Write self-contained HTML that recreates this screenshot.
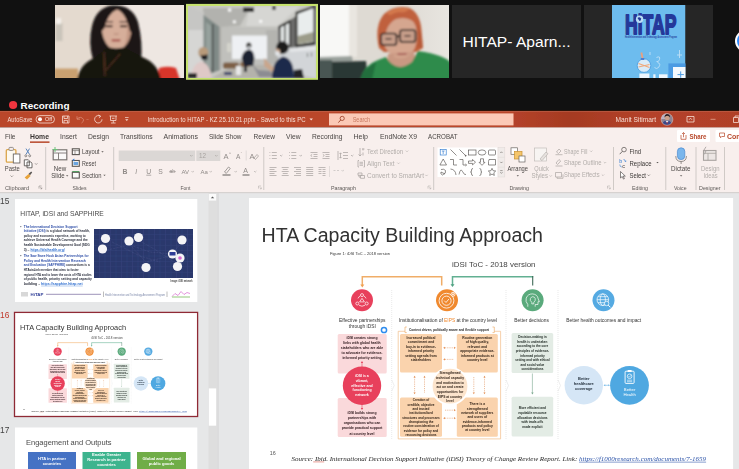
<!DOCTYPE html>
<html lang="en">
<head>
<meta charset="utf-8">
<title>Zoom Meeting - PowerPoint share</title>
<style>
html,body{margin:0;padding:0;background:#111;width:739px;height:469px;overflow:hidden}
svg{display:block;position:absolute;left:0;top:0}
text{font-family:"Liberation Sans",sans-serif}
.ser{font-family:"Liberation Serif",serif}
</style>
</head>
<body>
<svg width="739" height="469" viewBox="0 0 739 469">
<defs>
<filter id="b1" x="-10%" y="-10%" width="120%" height="120%"><feGaussianBlur stdDeviation="0.8"/></filter>
<filter id="b2" x="-10%" y="-10%" width="120%" height="120%"><feGaussianBlur stdDeviation="1.6"/></filter>
<filter id="b05" x="-5%" y="-5%" width="110%" height="110%"><feGaussianBlur stdDeviation="0.35"/></filter>
<clipPath id="c1"><rect x="55" y="5" width="129" height="73"/></clipPath>
<clipPath id="c2"><rect x="188" y="6" width="128" height="72"/></clipPath>
<clipPath id="c3"><rect x="320" y="5" width="129" height="73"/></clipPath>
<clipPath id="c5"><rect x="612" y="5" width="73.500" height="73"/></clipPath>
<linearGradient id="g3" x1="0" x2="1" y1="0" y2="0"><stop offset="0" stop-color="#dedad3"/><stop offset="1" stop-color="#e8e5e0"/></linearGradient>
<filter id="soft" x="0" y="0" width="100%" height="100%" filterUnits="userSpaceOnUse"><feGaussianBlur stdDeviation="0.32"/></filter>
</defs>
<rect x="0" y="0" width="739" height="469" fill="#111111"/>

<!-- ============ ZOOM VIDEO STRIP ============ -->
<!-- tile 1 : woman, black hair -->
<g clip-path="url(#c1)">
  <rect x="55" y="5" width="129" height="73" fill="#e4dacf"/>
  <rect x="118" y="5" width="66" height="73" fill="#eee7e2"/>
  <g filter="url(#b1)">
    <rect x="55.500" y="23" width="7" height="18" fill="#c9c4ba"/>
    <rect x="56" y="18" width="5" height="6" fill="#f4f1ec"/>
    <rect x="54" y="68.500" width="24" height="12" fill="#c9a070"/>
    <path d="M157 80 L159 68 Q168 65.500 176 68 L180 80 Z" fill="#d8352a"/>
    <!-- hair -->
    <path d="M93 60 Q88 42 92 26 Q96 8 112 5.500 Q132 4 138 22 Q143 42 141 62 L128 62 L102 62 Z" fill="#1d1614"/>
    <!-- face -->
    <path d="M101.500 26 Q102 10 116 9 Q131 10 131.500 27 Q131 40 124 47 Q116.500 52 109 47 Q102 40 101.500 26Z" fill="#d6ae9a"/>
    <path d="M124 12 Q132 16 131.500 30 Q130 42 124 47 Q128 36 127 24Z" fill="#c49884"/>
    <path d="M101 32 Q99 14 110 8.500 Q116 6.500 117 9.500 Q108 13 104.500 28Z" fill="#1d1614"/>
    <path d="M133 36 Q135 14 122 8.500 Q117 6.500 117 9.500 Q126 13 129.500 30Z" fill="#1d1614"/>
    <!-- brows/eyes/nose/mouth -->
    <rect x="104.500" y="21.300" width="8.500" height="1.200" fill="#4a3a34"/>
    <rect x="119.500" y="21.300" width="8.500" height="1.200" fill="#4a3a34"/>
    <rect x="105.500" y="25.300" width="7" height="1.900" fill="#33231f"/>
    <rect x="120" y="25.300" width="7" height="1.900" fill="#33231f"/>
    <path d="M114 33.500 q2 1.500 4.500 0" stroke="#b88a78" stroke-width="1.200" fill="none"/>
    <rect x="111.500" y="39.300" width="9" height="2.200" rx="1" fill="#a8544e"/>
    <!-- sweater -->
    <path d="M77 80 Q80 64 94 58 L104 50 Q108 46.500 116 48.500 Q126 46.500 129 50 L142 57 Q158 63 161 80 Z" fill="#17130f"/>
    <path d="M104 52 L105 76 M120 54 L106 70" stroke="#8a4a30" stroke-width="0.700" fill="none"/>
  </g>
</g>

<!-- tile 2 : meeting room, active speaker border -->
<rect x="186" y="3.900" width="132" height="75.900" fill="#c6e26e"/>
<g clip-path="url(#c2)">
  <rect x="188" y="6" width="128" height="72" fill="#c6c6c2"/>
  <g filter="url(#b1)">
    <!-- ceiling -->
    <path d="M188 6 L316 6 L316 8 L278 27 L221 27 L203 14 L188 8Z" fill="#cacac6"/>
    <path d="M203 8 L250 8 L240 26 L221 27 L203 18Z" fill="#b2b2ae"/>
    <path d="M250 6 L300 6 L278 26 L246 26Z" fill="#d6d6d3"/>
    <!-- back wall -->
    <rect x="220" y="27" width="60" height="40" fill="#c0c0bc"/>
    <rect x="266" y="30" width="14" height="34" fill="#b4b4b0"/>
    <!-- left wall -->
    <path d="M188 6 L203.500 12 L203.500 78 L188 78Z" fill="#d6d6d4"/>
    <path d="M188 6 L203.500 12 L203.500 30 L188 30Z" fill="#c6c6c4"/>
    <path d="M203.500 15 L220 27 L220 70 L203.500 76Z" fill="#808a87"/>
    <path d="M206 22 L211 26 L211 68 L206 70Z" fill="#96a19d"/>
    <rect x="212" y="24" width="1.500" height="48" fill="#4a4e4c"/>
    <rect x="219" y="27" width="2" height="42" fill="#a8a8a4"/>
    <!-- right wall with windows -->
    <path d="M278 27 L316 6 L316 78 L278 70Z" fill="#d2d5d8"/>
    <path d="M278 27 L316 6 L316 10 L278 30Z" fill="#8a8a86"/>
    <path d="M290 20 L296 16 L296 47 L290 48Z" fill="#6c6c6a"/>
    <path d="M295.500 12 L315.500 5 L315.500 45 L295.500 47.500Z" fill="#2a2a28"/>
    <path d="M297.500 14 L313.500 8 L313.500 42 L297.500 44.500Z" fill="#e9eded"/>
    <path d="M298 36 L313 32 L313 41.500 L298 44Z" fill="#9c9c8a"/>
    <path d="M278.500 26 L290.500 19.500 L290.500 47 L278.500 49Z" fill="#2a2a28"/>
    <path d="M280.500 27.500 L284 25.500 L284 46 L280.500 46.500Z" fill="#e4e8e8"/>
    <path d="M285.500 25 L289 23 L289 45 L285.500 45.500Z" fill="#e4e8e8"/>
    <path d="M290 49 L316 46 L316 50 L290 52Z" fill="#e4e6e8"/>
    <rect x="307" y="53" width="1" height="4" fill="#6a6a6a"/><rect x="311" y="52.500" width="1" height="4" fill="#6a6a6a"/>
    <!-- projector -->
    <rect x="243" y="7.500" width="11" height="4.500" fill="#262626"/>
    <rect x="272.500" y="6" width="3" height="4" fill="#262626"/>
    <circle cx="229.600" cy="10" r="1.700" fill="#ffffff"/><circle cx="234.400" cy="21.800" r="1.500" fill="#ffffff"/><circle cx="260.700" cy="21.300" r="1.500" fill="#ffffff"/>
    <!-- whiteboard -->
    <rect x="232" y="35.500" width="35" height="23.500" fill="#eef0f3"/>
    <rect x="227" y="43" width="4" height="9" fill="#d4d4cc"/>
    <!-- table -->
    <path d="M212 78 L234 65 L268 65 L280 78Z" fill="#b4b2ac"/>
    <rect x="223" y="62.500" width="16" height="6" rx="2" fill="#7d5e44"/>
    <rect x="240" y="62" width="10" height="5" rx="2" fill="#8a6a4c"/>
    <path d="M252 64 L259 77 L274 77 L270 71 L258 70Z" fill="#8c8c92"/>
    <rect x="236" y="66" width="5" height="9" fill="#e8e8e8"/>
    <rect x="224" y="72" width="8" height="3" fill="#34406a"/>
    <rect x="244" y="66" width="3" height="6" fill="#2a2a30"/>
    <!-- left person -->
    <ellipse cx="203.300" cy="52.500" rx="5" ry="5.500" fill="#b89a7a"/>
    <path d="M200.500 55.500 L207.500 54.500 L207.500 59.500 L202 60Z" fill="#1e1e20"/>
    <path d="M191 78 Q192 64 201 61.500 Q210 63.500 211.500 78Z" fill="#dfc9c7"/>
    <rect x="188" y="73" width="9" height="5" fill="#2a2a2c"/>
    <!-- standing person -->
    <ellipse cx="248.800" cy="45.400" rx="2.600" ry="3" fill="#2a2622"/>
    <rect x="247.600" y="46" width="2.600" height="2" fill="#c8ccd0"/>
    <path d="M241.500 58 Q243 50 249 49.500 Q254 50 254.500 58 L253 66 L244 66Z" fill="#1e2230"/>
    <!-- right person -->
    <ellipse cx="282.400" cy="47.600" rx="6.300" ry="6.300" fill="#1c1c1e"/>
    <path d="M276 48 L280 50 L280 55 L276.500 55Z" fill="#caa890"/>
    <path d="M275 51 L279.500 52 L279.500 56 L275.800 55.500Z" fill="#e4e8ec"/>
    <path d="M272 78 Q272 61 283 56.500 Q294 58 294 78Z" fill="#1d2a4c"/>
    <path d="M264 58 L268 62 L274 68 L272 72 L264 66Z" fill="#c9a68c"/>
    <path d="M294 70 L302 69 L304 78 L294 78Z" fill="#202228"/>
  </g>
</g>

<!-- tile 3 : woman, red hair, green shirt -->
<g clip-path="url(#c3)">
  <rect x="320" y="5" width="129" height="73" fill="#dedad3"/>
  <rect x="400" y="5" width="49" height="73" fill="url(#g3)"/>
  <g filter="url(#b1)">
    <rect x="318" y="3" width="31" height="57" fill="#f8f8f6"/>
    <rect x="349" y="5" width="8" height="52" fill="#e9e6e0"/>
    <path d="M318 57 L352 56 L353 63 L318 63Z" fill="#9aa19c"/>
    <path d="M318 62 L366 61 L368 80 L318 80Z" fill="#2c3836"/>
    <rect x="318" y="60" width="14" height="20" fill="#4a5652"/>
    <!-- hair -->
    <path d="M379 48 Q374 26 384 14 Q394 5 408 7.500 Q420 12 421.500 30 L423 48 L416 52 L384 52Z" fill="#c0603c"/>
    <path d="M386 13 Q398 5.500 410 9 Q404 13 392 16Z" fill="#d4794e"/>
    <!-- face -->
    <path d="M381.500 34 Q382 18 396 15.500 Q412 14 416.500 28 Q419 44 412 53 Q404 61 394 57 Q383 50 381.500 34Z" fill="#d5a68f"/>
    <path d="M381 34 Q381 16 398 12 Q414 12 418 26 Q410 16 398 18.500 Q388 21 385 36Z" fill="#c0603c"/>
    <path d="M415 22 Q423 32 422.500 48 L417 47 Q419 36 415 22Z" fill="#b85a38"/>
    <!-- glasses -->
    <rect x="381" y="33.500" width="15.500" height="11.500" rx="2.500" fill="#c79e8a" stroke="#2a2422" stroke-width="1.700"/>
    <rect x="400" y="30" width="15.500" height="12" rx="2.500" fill="#c79e8a" stroke="#2a2422" stroke-width="1.700"/>
    <path d="M396.500 37 L400 35.500" stroke="#2a2422" stroke-width="1.500"/>
    <rect x="385.500" y="38" width="6" height="1.600" fill="#4a3a34"/><rect x="404.500" y="35" width="6" height="1.600" fill="#4a3a34"/>
    <!-- neck + shirt -->
    <path d="M388 54 L414 52 L418 70 L386 72Z" fill="#c99882"/>
    <path d="M394 57 Q404 61 412 53 Q404 58 394 55Z" fill="#d5a68f"/>
    <rect x="397.500" y="53" width="9" height="1.800" fill="#a8605a"/>
    <path d="M360 80 Q364 65 378 60 L386 57 Q396 74 412 62 L418 51 Q446 55 452 64 L452 80Z" fill="#2d8b4b"/>
    <path d="M360 80 Q364 68 376 62 L372 80Z" fill="#216e3c"/>
  </g>
</g>

<!-- tile 4 : name only -->
<rect x="452" y="5" width="129" height="73" fill="#262626"/>
<text x="462.500" y="47" font-size="15.400" fill="#ffffff" textLength="108" lengthAdjust="spacingAndGlyphs">HITAP- Aparn...</text>

<!-- tile 5 : HITAP logo -->
<rect x="584" y="5" width="129" height="73" fill="#262626"/>
<g clip-path="url(#c5)">
  <rect x="612" y="5" width="73.500" height="73" fill="#6dbcee"/>
  <text x="625" y="34.400" font-size="27.800" font-weight="700" fill="#24389a" stroke="#24389a" stroke-width="1.800" stroke-linejoin="round" textLength="51.500" lengthAdjust="spacingAndGlyphs">HiTAP</text>
  <circle cx="639.600" cy="19.200" r="3.700" fill="#b9dcf4"/>
  <path d="M637.500 18 q2 -1.500 3.500 0.500 q0.500 2 -1.500 2.500z" fill="#24389a"/>
  <text x="625" y="38.200" font-size="2.900" fill="#24389a" font-weight="700" textLength="52" lengthAdjust="spacingAndGlyphs">Health Intervention and Technology Assessment Program</text>
  <g filter="url(#b05)">
    <circle cx="644" cy="65.600" r="6.800" fill="#d9ecf9" stroke="#4f9fe0" stroke-width="0.900"/>
    <path d="M638.500 63.500 L649.500 67.500 M638.500 67 L649.500 64.500" stroke="#f0a87a" stroke-width="1.200"/>
    <rect x="641.200" y="52.500" width="1.800" height="7" fill="#e8a080" transform="rotate(-12 642 56)"/>
    <rect x="640.800" y="58" width="3.500" height="2" fill="#4f7fd0"/>
    <rect x="639.400" y="73.500" width="10" height="4.500" fill="#eef6fd"/>
    <rect x="659" y="74.300" width="8.500" height="3.700" fill="#eef6fd"/>
    <rect x="653.300" y="74.300" width="2.200" height="3.700" fill="#eef6fd"/>
    <rect x="668.400" y="63.400" width="18" height="15" fill="#4b9be3"/>
    <rect x="673" y="67" width="13" height="11" fill="#f4f9fe"/>
    <path d="M677.500 74.600 L683.900 74.600 M680.700 71.400 L680.700 77.800" stroke="#4b9be3" stroke-width="1"/>
    <path d="M656.500 57.500 q4 -2 3 2 q-1 3 -3 2 m1 1 q4 1 1 5 q-2 2 -4 0" stroke="#bfe0f6" stroke-width="0.900" fill="none"/>
    <path d="M679.500 50 l0 8 m-2.500 -3 l5 0" stroke="#bfe0f6" stroke-width="0.900"/>
    <path d="M650 52 v3" stroke="#bfe0f6" stroke-width="0.900"/>
  </g>
</g>
<!-- tile 6 partial avatar -->
<circle cx="746" cy="41" r="11" fill="#ffffff"/>
<circle cx="746" cy="41" r="9" fill="#2d8cff"/>
<!-- ============ RECORDING ============ -->
<circle cx="13.100" cy="105" r="4.100" fill="#f0353f"/>
<text x="20.600" y="108.700" font-size="9.900" font-weight="700" fill="#ffffff">Recording</text>

<!-- ============ POWERPOINT ============ -->
<g filter="url(#soft)">
<!-- title bar -->
<rect x="0" y="111" width="739" height="16.500" fill="#ba472a"/>
<linearGradient id="tbg" x1="0" x2="1" y1="0" y2="0"><stop offset="0" stop-color="#b4422a"/><stop offset="0.25" stop-color="#a53a22"/><stop offset="0.6" stop-color="#b4422a"/><stop offset="1" stop-color="#b04028"/></linearGradient>
<rect x="513.500" y="111" width="226" height="16.500" fill="url(#tbg)"/>
<rect x="0" y="110.300" width="739" height="0.800" fill="#4a140a" opacity="0.7"/><rect x="0" y="111.100" width="739" height="0.700" fill="#d07a62" opacity="0.6"/>
<g fill="#f7ddd3" font-size="6.600">
  <text x="7.500" y="121.700" textLength="25" lengthAdjust="spacingAndGlyphs">AutoSave</text>
  <rect x="36" y="115.600" width="18.500" height="7.400" rx="3.700" fill="none" stroke="#f7ddd3" stroke-width="0.800"/>
  <circle cx="40" cy="119.300" r="2" fill="#ffffff"/>
  <text x="45" y="121.400" font-size="5.400" fill="#fbe9e2">Off</text>
  <!-- save -->
  <path d="M62.500 116 h6.500 v7 h-6.500z M64 116 v2.500 h3.600 v-2.500 M64 123 v-2.600 h3.600 v2.600" fill="none" stroke="#f7ddd3" stroke-width="0.800"/>
  <!-- undo (dim) -->
  <path d="M77 116.200 v3 h3 M77 119 q4 -3.500 6.500 0.500 q0.500 2 -2 3.500" fill="none" stroke="#d98a72" stroke-width="0.800"/>
  <path d="M86.500 119 l1 1 l1 -1" fill="none" stroke="#d98a72" stroke-width="0.600"/>
  <!-- redo -->
  <path d="M100.500 116.300 a3.700 3.700 0 1 0 1.500 3 M98.500 115 l2.200 1.300 l-1.800 1.500" fill="none" stroke="#f7ddd3" stroke-width="0.800"/>
  <!-- present -->
  <path d="M109.500 116 h7.500 M110.500 116 v4.500 h5.500 v-4.500 M113.300 120.500 v2.300 M111 123 h4.600 M112 118.300 h2.500" fill="none" stroke="#f7ddd3" stroke-width="0.800"/>
  <!-- customize -->
  <path d="M125 117.500 h3.600" stroke="#f7ddd3" stroke-width="0.700"/><path d="M125.200 119.300 l1.600 1.700 l1.600 -1.700z" fill="#f7ddd3"/>
  <text x="147.500" y="121.600" font-size="6.300" textLength="158" lengthAdjust="spacingAndGlyphs">Introduction to HITAP - KZ 25.10.21.pptx  -  Saved to this PC</text>
  <path d="M309.500 118.600 l1.700 1.800 l1.700 -1.800z" fill="#f7ddd3"/>
</g>
<!-- search -->
<rect x="329" y="113.400" width="184.500" height="12" fill="#fbc9b6"/>
<circle cx="342.200" cy="118.400" r="2.100" fill="none" stroke="#9a3b22" stroke-width="0.800"/><path d="M340.700 120 l-2.300 2.600" stroke="#9a3b22" stroke-width="0.900"/>
<text x="352.700" y="121.800" font-size="6.600" fill="#c77a62" textLength="17.500" lengthAdjust="spacingAndGlyphs">Search</text>
<!-- user -->
<text x="615.500" y="121.600" font-size="6.500" fill="#f7ddd3" textLength="40.500" lengthAdjust="spacingAndGlyphs">Manit Sitimart</text>
<clipPath id="cav"><circle cx="667" cy="119.400" r="5.900"/></clipPath>
<g clip-path="url(#cav)"><rect x="661" y="113" width="12" height="13" fill="#8c8494"/>
<rect x="661" y="113" width="5" height="6" fill="#b9b2c2"/>
<circle cx="667.200" cy="117.800" r="2.500" fill="#c9a08a"/>
<path d="M664.500 117.500 q0 -3.500 2.800 -3.500 q2.800 0 2.700 3.500 q-1 -1.800 -2.700 -1.800 q-1.800 0 -2.800 1.800z" fill="#2a2022"/>
<path d="M661.500 126 q1 -5.500 5.500 -5.500 q4.500 0 5.500 5.500z" fill="#3a4a8a"/>
<path d="M665.500 120.800 l1.600 2.200 l1.600 -2.200z" fill="#f0e8e8"/>
<path d="M666.600 122 l0.500 3 l0.500 -3z" fill="#c0303a"/></g>
<circle cx="667" cy="119.400" r="5.900" fill="none" stroke="#e8c8c0" stroke-width="0.500"/>
<path d="M687 116.500 h7 v5.500 h-7z M689 119.800 l1.500 -1.600 l1.500 1.600" fill="none" stroke="#f7ddd3" stroke-width="0.800"/>
<path d="M710.500 119.300 h5" stroke="#e7a792" stroke-width="0.800"/>
<path d="M733.500 117.500 h5 v5 h-5z M735 117.500 v-1.500 h4" fill="none" stroke="#f7ddd3" stroke-width="0.800"/>

<!-- tab row + ribbon bg -->
<rect x="0" y="127.400" width="739" height="65.100" fill="#f8efed"/>
<g font-size="7.300" fill="#4a4644">
  <text x="5" y="139.200" textLength="10.500" lengthAdjust="spacingAndGlyphs">File</text>
  <text x="30" y="139.200" font-weight="700" fill="#3a3634" textLength="19" lengthAdjust="spacingAndGlyphs">Home</text>
  <text x="60" y="139.200" textLength="17" lengthAdjust="spacingAndGlyphs">Insert</text>
  <text x="88" y="139.200" textLength="21" lengthAdjust="spacingAndGlyphs">Design</text>
  <text x="120" y="139.200" textLength="32.500" lengthAdjust="spacingAndGlyphs">Transitions</text>
  <text x="163.500" y="139.200" textLength="34.500" lengthAdjust="spacingAndGlyphs">Animations</text>
  <text x="209" y="139.200" textLength="32.500" lengthAdjust="spacingAndGlyphs">Slide Show</text>
  <text x="253.500" y="139.200" textLength="21.500" lengthAdjust="spacingAndGlyphs">Review</text>
  <text x="286" y="139.200" textLength="14.500" lengthAdjust="spacingAndGlyphs">View</text>
  <text x="312" y="139.200" textLength="30.500" lengthAdjust="spacingAndGlyphs">Recording</text>
  <text x="353.500" y="139.200" textLength="14.500" lengthAdjust="spacingAndGlyphs">Help</text>
  <text x="380" y="139.200" textLength="37" lengthAdjust="spacingAndGlyphs">EndNote X9</text>
  <text x="428" y="139.200" textLength="29.500" lengthAdjust="spacingAndGlyphs">ACROBAT</text>
</g>
<rect x="30" y="141.400" width="19.500" height="1.500" fill="#b7472a"/>
<!-- share / comments -->
<rect x="677" y="130" width="33" height="12" rx="1" fill="#ffffff"/>
<path d="M681 135 v4.300 h5 v-4.300 M683.500 137.300 v-4.500 M682 134 l1.500 -1.500 l1.500 1.500" fill="none" stroke="#b7472a" stroke-width="0.700"/>
<text x="689.500" y="139" font-size="7" font-weight="700" fill="#b7472a" textLength="17" lengthAdjust="spacingAndGlyphs">Share</text>
<rect x="715.500" y="130" width="30" height="12" rx="1" fill="#ffffff"/>
<path d="M719.500 133 h5 v3.500 h-2.800 l-1.200 1.300 v-1.300 h-1z" fill="none" stroke="#b7472a" stroke-width="0.700"/>
<text x="727" y="139" font-size="7" font-weight="700" fill="#b7472a">Com</text>
<g font-size="6.500" fill="#4c4846">
<!-- separators -->
<g stroke="#cbc5c2" stroke-width="0.900">
<path d="M45.700 147 v43 M113.700 147 v43 M263.800 147 v43 M433.700 147 v43 M613.500 147 v43 M665.800 147 v43 M696 147 v43 M724.500 147 v43"/>
</g>
<!-- ===== Clipboard ===== -->
<rect x="6.300" y="149.600" width="9.600" height="12.600" rx="1" fill="#fdf9f1" stroke="#dba54a" stroke-width="1.300"/>
<rect x="9" y="147.400" width="4.400" height="3" rx="0.900" fill="#f8efed" stroke="#8a8582" stroke-width="0.900"/>
<rect x="13.300" y="154" width="6.600" height="9" fill="#ffffff" stroke="#6a6562" stroke-width="0.900"/>
<text x="4.800" y="170.500" textLength="15" lengthAdjust="spacingAndGlyphs">Paste</text>
<path d="M10.500 175.500 l1.300 1.300 l1.300 -1.300" fill="none" stroke="#6a6562" stroke-width="0.600"/>
<path d="M26 148.600 l3.500 5.800 M29.500 148.600 l-3.500 5.800" stroke="#4a7ab8" stroke-width="0.900"/><circle cx="25.800" cy="155.800" r="1" fill="none" stroke="#5a5552" stroke-width="0.600"/><circle cx="29.700" cy="155.800" r="1" fill="none" stroke="#5a5552" stroke-width="0.600"/>
<path d="M24.300 159.800 h4 l1 1 v5 h-5z M27 162 h3.800 l1.200 1.200 v4.600 h-5z" fill="#ffffff" stroke="#4a4542" stroke-width="0.800"/>
<path d="M35 163.300 l1.200 1.200 l1.200 -1.200" fill="none" stroke="#6a6562" stroke-width="0.600"/>
<path d="M24.600 177.500 l4 -3.500 l2 2 l-3.600 3.600z" fill="#e8a33a"/><path d="M28.600 173.800 l2.600 -2.200 l1 1 l-2.200 2.600z" fill="#5a5552"/>
<text x="5" y="190.200" font-size="6" fill="#5c5856" textLength="24" lengthAdjust="spacingAndGlyphs">Clipboard</text>
<path d="M39 186 h2.600 M39 186 v2.600 M40.300 187.300 l1.500 1.500 M41.800 187.400 v1.400 h-1.400" fill="none" stroke="#7a7572" stroke-width="0.500"/>
<!-- ===== Slides ===== -->
<rect x="53.200" y="149.800" width="13.600" height="10" fill="#fbfaf9" stroke="#7a7572" stroke-width="1.200"/>
<path d="M53.200 153 h13.600 M58.500 153 v6.800" stroke="#7a7572" stroke-width="0.900"/>
<path d="M55 147 v5 M52.500 149.500 h5" stroke="#6cc07a" stroke-width="1"/>
<text x="53.800" y="170.500" textLength="12.500" lengthAdjust="spacingAndGlyphs">New</text>
<text x="51.200" y="178.300" textLength="13.500" lengthAdjust="spacingAndGlyphs">Slide</text>
<path d="M66 175.300 l1.200 1.300 l1.200 -1.300z" fill="#5a5552"/>
<rect x="72.300" y="148.800" width="7" height="5.800" fill="#fbfaf9" stroke="#5a5552" stroke-width="1.100"/><path d="M72.300 150.600 h7 M75 150.600 v4" stroke="#5a5552" stroke-width="0.600"/>
<text x="82" y="154.300" textLength="17.500" lengthAdjust="spacingAndGlyphs">Layout</text><path d="M101.300 151.300 l1.200 1.300 l1.200 -1.300z" fill="#5a5552"/>
<rect x="72.300" y="160.500" width="7" height="5.800" fill="#fbfaf9" stroke="#5a5552" stroke-width="1.100"/><path d="M72.300 160 l2 -1.500 v3z" fill="#2f7ad0"/><rect x="73.500" y="162" width="4.600" height="3" fill="#6aa5e0"/>
<text x="82" y="166" textLength="14" lengthAdjust="spacingAndGlyphs">Reset</text>
<rect x="72.300" y="172.300" width="7" height="5.800" fill="#fbfaf9" stroke="#5a5552" stroke-width="1.100"/><path d="M72.300 171.600 h7" stroke="#4a9a58" stroke-width="1"/>
<text x="82" y="177.800" textLength="19.500" lengthAdjust="spacingAndGlyphs">Section</text><path d="M103.300 174.800 l1.200 1.300 l1.200 -1.300z" fill="#5a5552"/>
<text x="72.500" y="190.200" font-size="6" fill="#5c5856" textLength="14" lengthAdjust="spacingAndGlyphs">Slides</text>
<!-- ===== Font ===== -->
<rect x="118.700" y="150.500" width="76.500" height="10.500" fill="#dbd7d5"/>
<path d="M190 155 l1.300 1.300 l1.300 -1.300" fill="none" stroke="#a8a3a0" stroke-width="0.600"/>
<rect x="196.300" y="150.500" width="24" height="10.500" fill="#dbd7d5"/>
<text x="199" y="158.200" font-size="6.300" fill="#a8a3a0">12</text>
<path d="M215 155 l1.300 1.300 l1.300 -1.300" fill="none" stroke="#a8a3a0" stroke-width="0.600"/>
<g fill="#908b88">
<text x="223.500" y="158.500" font-size="7.500">A</text><text x="229" y="154.500" font-size="4">^</text>
<text x="236" y="158.500" font-size="6.500">A</text><text x="240.800" y="154.800" font-size="4">ˇ</text>
<text x="249.500" y="158.500" font-size="7.500">A</text><path d="M254 158 l3 -3.500 l1.500 1.500 l-3 3.500z" fill="none" stroke="#908b88" stroke-width="0.600"/>
<path d="M246.200 150.500 v10" stroke="#d9d3d0" stroke-width="0.700"/>
<text x="122.600" y="173.800" font-size="6.800" font-weight="700">B</text>
<text x="135.300" y="173.800" font-size="6.800" font-style="italic">I</text>
<text x="146.300" y="173.800" font-size="6.800" text-decoration="underline">U</text>
<text x="158.300" y="173.800" font-size="6.800">S</text>
<text x="169.500" y="173.300" font-size="5">ab</text><path d="M169 171.600 h7" stroke="#908b88" stroke-width="0.500"/>
<text x="181.500" y="173.600" font-size="6">AV</text><path d="M191.500 171 l1.200 1.200 l1.200 -1.200" fill="none" stroke="#a8a3a0" stroke-width="0.600"/>
<text x="200.500" y="173.600" font-size="6">Aa</text><path d="M209.500 171 l1.200 1.200 l1.200 -1.200" fill="none" stroke="#a8a3a0" stroke-width="0.600"/>
<path d="M224.500 172 l4 -5 l1.800 1.400 l-4 5z" fill="none" stroke="#807b78" stroke-width="0.700"/>
<rect x="222.500" y="174.200" width="8" height="1.600" fill="#9a9592"/>
<path d="M234.500 171 l1.200 1.200 l1.200 -1.200" fill="none" stroke="#a8a3a0" stroke-width="0.600"/>
<text x="243.300" y="173" font-size="7">A</text><rect x="242.500" y="174.200" width="7" height="1.600" fill="#9a9592"/>
<path d="M254 171 l1.200 1.200 l1.200 -1.200" fill="none" stroke="#a8a3a0" stroke-width="0.600"/>
</g>
<text x="180.500" y="190.200" font-size="6" fill="#5c5856" textLength="10" lengthAdjust="spacingAndGlyphs">Font</text>
<path d="M258.500 186 h2.600 M258.500 186 v2.600 M259.800 187.300 l1.500 1.500 M261.300 187.400 v1.400 h-1.400" fill="none" stroke="#aaa5a2" stroke-width="0.500"/>
<!-- ===== Paragraph ===== -->
<g stroke="#a6a19e" stroke-width="0.700" fill="none">
<g transform="translate(-1.500 0)">
<path d="M271 152.500 h0.800 M271 155.500 h0.800 M271 158.500 h0.800 M273.300 152.500 h5 M273.300 155.500 h5 M273.300 158.500 h5"/>
<path d="M281.500 155 l1.200 1.200 l1.200 -1.200"/>
<path d="M290.500 152.500 h0.800 M290.500 155.500 h0.800 M290.500 158.500 h0.800 M292.800 152.500 h5 M292.800 155.500 h5 M292.800 158.500 h5"/>
<path d="M301 155 l1.200 1.200 l1.200 -1.200"/>
<path d="M312 152.500 h7 M315 154.500 h4 M315 156.500 h4 M312 158.500 h7 M313.700 154.300 l-1.500 1.200 l1.500 1.200"/>
<path d="M324 152.500 h7 M327 154.500 h4 M327 156.500 h4 M324 158.500 h7 M324.300 154.300 l1.500 1.200 l-1.500 1.200"/>
<path d="M339.500 151 v9"/>
<path d="M344.500 152.500 h5 M344.500 155.500 h5 M344.500 158.500 h5 M342 153 v5 M341 154 l1 -1.200 l1 1.200 M341 157 l1 1.200 l1 -1.200"/>
<path d="M352.500 155 l1.200 1.200 l1.200 -1.200"/>
</g>
<path d="M269.500 167.500 h7 M269.500 169.500 h5 M269.500 171.500 h7 M269.500 173.500 h5 M269.500 175.500 h7"/>
<path d="M281.700 167.500 h7 M282.700 169.500 h5 M281.700 171.500 h7 M282.700 173.500 h5 M281.700 175.500 h7"/>
<path d="M294 167.500 h7 M296 169.500 h5 M294 171.500 h7 M296 173.500 h5 M294 175.500 h7"/>
<path d="M306.200 167.500 h7 M306.200 169.500 h7 M306.200 171.500 h7 M306.200 173.500 h7 M306.200 175.500 h7"/>
<path d="M318.500 167.500 h7 M318.500 169.500 h3 M322.500 169.500 h3 M318.500 171.500 h3 M322.500 171.500 h3 M318.500 173.500 h3 M322.500 173.500 h3 M322.500 175.500 h3"/>
<path d="M329.500 166 v11" stroke="#d9d3d0"/>
<path d="M333.500 170.500 h2 M337 170.500 h2 M341.500 170 l1.200 1.200 l1.200 -1.200" stroke="#c2bdba"/>
</g>
<g fill="#b2adaa">
<path d="M360 148 v8 M358.500 154.400 l1.500 1.600 l1.500 -1.600 M363 148.500 v2 M362 149 h2.500 M363 152.500 v3" stroke="#a6a19e" stroke-width="0.700" fill="none"/>
<text x="367" y="153.500" font-size="6.300" textLength="36" lengthAdjust="spacingAndGlyphs">Text Direction</text><path d="M405.800 150.600 l1.200 1.200 l1.200 -1.200" fill="none" stroke="#b2adaa" stroke-width="0.600"/>
<path d="M359 160.500 h-1 v6.500 h1 M363.500 160.500 h1 v6.500 h-1 M359.500 162.300 h3.500 M359.500 163.800 h3.500 M359.500 165.300 h3.500" stroke="#a6a19e" stroke-width="0.700" fill="none"/>
<text x="367" y="165.500" font-size="6.300" textLength="27.500" lengthAdjust="spacingAndGlyphs">Align Text</text><path d="M397.300 162.600 l1.200 1.200 l1.200 -1.200" fill="none" stroke="#b2adaa" stroke-width="0.600"/>
<path d="M358 173 h4 v2.300 h-4z M360.500 175.500 h4 v2.800 h-4z M359 175.300 v1.800 h1.500" stroke="#a6a19e" stroke-width="0.700" fill="none"/>
<text x="367" y="177.800" font-size="6.300" textLength="57" lengthAdjust="spacingAndGlyphs">Convert to SmartArt</text><path d="M425.300 174.800 l1.200 1.200 l1.200 -1.200" fill="none" stroke="#b2adaa" stroke-width="0.600"/>
</g>
<text x="331" y="190.200" font-size="6" fill="#5c5856" textLength="25" lengthAdjust="spacingAndGlyphs">Paragraph</text>
<path d="M428 186 h2.600 M428 186 v2.600 M429.300 187.300 l1.500 1.500 M430.800 187.400 v1.400 h-1.400" fill="none" stroke="#aaa5a2" stroke-width="0.500"/>
<!-- ===== Drawing ===== -->
<rect x="437.500" y="147.500" width="60" height="29.500" fill="#ffffff"/>
<rect x="498" y="147.500" width="6.800" height="29.500" fill="#f0ebe9" stroke="#ddd8d5" stroke-width="0.500"/>
<path d="M498 157.300 h6.800 M498 167.200 h6.800" stroke="#ddd8d5" stroke-width="0.500"/>
<path d="M500.300 153 l1.100 -1.200 l1.100 1.200 M500.300 161.800 l1.100 1.200 l1.100 -1.200 M500.200 170.600 h2.400 M500.300 172.200 l1.100 1.200 l1.100 -1.200" fill="none" stroke="#6a6562" stroke-width="0.600"/>
<g fill="none" stroke="#55504e" stroke-width="0.650">
<rect x="440.200" y="149.500" width="6" height="5.500" stroke="#2f7ad0"/><path d="M441.800 151 h2.800 M443.200 151 v3" stroke="#2f7ad0"/>
<path d="M450.500 149.500 l6 6"/>
<path d="M459.500 149.500 l6 6"/><circle cx="465.700" cy="155.700" r="0.500" fill="#55504e"/>
<rect x="468.500" y="150" width="7.500" height="5"/>
<ellipse cx="482" cy="152.500" rx="3.800" ry="2.600"/>
<rect x="488.500" y="150" width="7" height="5" rx="1"/>
<path d="M443.200 159 l3.300 6 h-6.600z"/>
<path d="M450 159.500 h3.500 v5.500 h3.500"/>
<path d="M459.500 159.500 h3.500 v5.500 h3"/><path d="M465.500 164 l1.200 1 l-1.200 1" />
<path d="M468.500 161 h4 v-1.500 l3 2.700 l-3 2.700 v-1.500 h-4z"/>
<path d="M480.500 158.800 h3 v3.500 h1.500 l-3 3 l-3 -3 h1.500z"/>
<path d="M489 159.500 h6.500 v5.500 h-7 v-3.500z"/>
<path d="M441 169.500 q3 -1 4.500 1 q1 3 -3 4.500 q-2.500 -1 -1.500 -3 l4 2"/>
<path d="M450.500 169 q5 0.500 5.500 6"/>
<path d="M459 174.500 q1.500 -7 3.500 -3 t3.500 3"/>
<path d="M473 168.500 q-1.500 0 -1.500 1.500 v1 q0 1 -1 1 q1 0 1 1 v1 q0 1.500 1.500 1.500"/>
<path d="M479.500 168.500 q1.500 0 1.500 1.500 v1 q0 1 1 1 q-1 0 -1 1 v1 q0 1.500 -1.500 1.500"/>
<path d="M492 168.300 l1.100 2.400 l2.600 0.300 l-1.900 1.800 l0.500 2.600 l-2.300 -1.300 l-2.300 1.300 l0.500 -2.600 l-1.900 -1.800 l2.600 -0.300z"/>
</g>
<!-- Arrange -->
<rect x="511" y="147.800" width="6.500" height="6.500" fill="#ffffff" stroke="#6a6562" stroke-width="0.700"/>
<rect x="514.500" y="151.500" width="7.500" height="7.500" fill="#f5c56a" stroke="#c9922e" stroke-width="0.700"/>
<rect x="519" y="156" width="6" height="6" fill="#ffffff" stroke="#6a6562" stroke-width="0.700"/>
<text x="507.500" y="170.500" textLength="20.500" lengthAdjust="spacingAndGlyphs">Arrange</text>
<path d="M516.600 175.300 l1.200 1.300 l1.200 -1.300z" fill="#5a5552"/>
<!-- Quick styles (dim) -->
<rect x="534.500" y="148" width="12" height="13" fill="#f7f4f2" stroke="#c2bdba" stroke-width="0.700"/>
<path d="M540 159 l6 -7 l2 1.700 l-6 7z" fill="#e6e1de" stroke="#b2adaa" stroke-width="0.600"/>
<g fill="#b2adaa"><text x="534.300" y="170.500" textLength="14.500" lengthAdjust="spacingAndGlyphs">Quick</text>
<text x="531.500" y="178.300" textLength="16.500" lengthAdjust="spacingAndGlyphs">Styles</text><path d="M549.500 175.300 l1.200 1.200 l1.200 -1.200" fill="none" stroke="#b2adaa" stroke-width="0.600"/>
<path d="M556.500 152 l2.500 -3 l2 2 l-2.500 2.500z M555.500 154.700 h7" fill="none" stroke="#aaa5a2" stroke-width="0.700"/>
<text x="564" y="153.600" font-size="6.300" textLength="23.500" lengthAdjust="spacingAndGlyphs">Shape Fill</text><path d="M590 150.600 l1.200 1.200 l1.200 -1.200" fill="none" stroke="#b2adaa" stroke-width="0.600"/>
<path d="M556 163 l3 -3.500 l1.700 1.500 l-3 3.500z M555.500 166 h7" fill="none" stroke="#aaa5a2" stroke-width="0.700"/>
<text x="564" y="165" font-size="6.300" textLength="37.500" lengthAdjust="spacingAndGlyphs">Shape Outline</text><path d="M603.800 162 l1.200 1.200 l1.200 -1.200" fill="none" stroke="#b2adaa" stroke-width="0.600"/>
<path d="M555.500 172.500 h6 v4.500 h-6z M557 177 v1.300 h6 v-4" fill="none" stroke="#aaa5a2" stroke-width="0.700"/>
<text x="564" y="177.300" font-size="6.300" textLength="35.500" lengthAdjust="spacingAndGlyphs">Shape Effects</text><path d="M601.800 174.500 l1.200 1.200 l1.200 -1.200" fill="none" stroke="#b2adaa" stroke-width="0.600"/>
</g>
<text x="509.500" y="190.200" font-size="6" fill="#5c5856" textLength="19.500" lengthAdjust="spacingAndGlyphs">Drawing</text>
<path d="M607.500 186 h2.600 M607.500 186 v2.600 M608.800 187.300 l1.500 1.500 M610.300 187.400 v1.400 h-1.400" fill="none" stroke="#aaa5a2" stroke-width="0.500"/>
<!-- ===== Editing ===== -->
<circle cx="624" cy="149.600" r="2.300" fill="none" stroke="#55504e" stroke-width="0.700"/><path d="M622.300 151.400 l-2.600 2.800" stroke="#55504e" stroke-width="0.800"/>
<text x="629.500" y="153.500" font-size="6.800" fill="#3c3836" textLength="11.500" lengthAdjust="spacingAndGlyphs">Find</text>
<text x="619.300" y="163" font-size="5.400" fill="#2f7ad0">b</text><text x="622.300" y="168" font-size="5.400" fill="#3c3836">c</text><path d="M619.800 164.500 q0 2.500 2 2.500 M623.500 159.500 q2 0 2 2 M624.600 160.800 l0.900 1 l0.900 -1" fill="none" stroke="#2f7ad0" stroke-width="0.600"/>
<text x="629.500" y="165.500" font-size="6.800" fill="#3c3836" textLength="22" lengthAdjust="spacingAndGlyphs">Replace</text><path d="M656.300 162 l1.200 1.300 l1.200 -1.300z" fill="#5a5552"/>
<path d="M620.500 171.500 v6.500 l1.700 -1.500 l1.300 2.600 l0.900 -0.500 l-1.300 -2.500 h2.200z" fill="#ffffff" stroke="#3c3836" stroke-width="0.600"/>
<text x="629.500" y="177.800" font-size="6.800" fill="#3c3836" textLength="16.500" lengthAdjust="spacingAndGlyphs">Select</text><path d="M647.500 174.600 l1.200 1.200 l1.200 -1.200" fill="none" stroke="#5a5552" stroke-width="0.600"/>
<text x="632" y="190.200" font-size="6" fill="#5c5856" textLength="16" lengthAdjust="spacingAndGlyphs">Editing</text>
<!-- ===== Voice ===== -->
<rect x="677.400" y="147.800" width="7.400" height="11.800" rx="3.700" fill="#7ab6ec" stroke="#4a8ad0" stroke-width="0.700"/>
<path d="M675.800 156 q0 5.500 5.300 5.500 q5.300 0 5.300 -5.500 M681.100 161.500 v2.500" fill="none" stroke="#6a6562" stroke-width="0.700"/>
<text x="671" y="170.500" textLength="19.500" lengthAdjust="spacingAndGlyphs">Dictate</text>
<path d="M679.900 175.300 l1.200 1.300 l1.200 -1.300z" fill="#5a5552"/>
<text x="674" y="190.200" font-size="6" fill="#5c5856" textLength="12.500" lengthAdjust="spacingAndGlyphs">Voice</text>
<!-- ===== Designer ===== -->
<rect x="703.500" y="150.500" width="12.500" height="9.800" fill="#ece6e4" stroke="#a8a3a0" stroke-width="1.100"/>
<path d="M703.500 153.300 h12.500 M708 153.300 v7" stroke="#a8a3a0" stroke-width="0.800"/><path d="M706 146.800 l-2.500 4 h2.500 l-1.500 3.500" fill="none" stroke="#a8a3a0" stroke-width="0.900"/>
<g fill="#b2adaa"><text x="701" y="170.500" textLength="18.500" lengthAdjust="spacingAndGlyphs">Design</text>
<text x="703.500" y="178.300" textLength="14" lengthAdjust="spacingAndGlyphs">Ideas</text></g>
<text x="699" y="190.200" font-size="6" fill="#5c5856" textLength="21.500" lengthAdjust="spacingAndGlyphs">Designer</text>
</g>
<!-- ===== workspace bg ===== -->
<rect x="0" y="192.500" width="739" height="276.500" fill="#e6e7e8"/>
<rect x="0" y="192" width="739" height="1.200" fill="#d6d2d0"/>
<!-- thumb scrollbar -->
<rect x="208.500" y="193" width="8.500" height="276" fill="#dedede"/>
<rect x="208.800" y="194" width="7.400" height="6.600" fill="#fbfbfb"/>
<path d="M210.800 198.300 l1.700 -1.900 l1.700 1.900z" fill="#5a5a5a"/>
<rect x="208.800" y="388.400" width="7.400" height="37.300" fill="#ffffff"/>
<rect x="217.500" y="193" width="1" height="276" fill="#d2d2d2"/>
<!-- slide numbers -->
<text x="0" y="204.200" font-size="8.400" fill="#444">15</text>
<text x="0" y="318.200" font-size="8.400" fill="#c0392b">16</text>
<text x="0" y="432.700" font-size="8.400" fill="#444">17</text>

<!-- ===== thumbnail 15 ===== -->
<rect x="15" y="199" width="182.300" height="103" fill="#ffffff"/>
<text x="20.300" y="216.300" font-size="7.700" fill="#4a4a4a" textLength="83.500" lengthAdjust="spacingAndGlyphs">HITAP, iDSI and SAPPHIRE</text>
<g font-size="3.400" fill="#2b2f3d" font-weight="700">
<text x="20.200" y="227.50">•</text>
<text x="23.700" y="227.50" textLength="54" lengthAdjust="spacingAndGlyphs"><tspan fill="#2f4fa8">The International Decision Support</tspan></text>
<text x="23.700" y="232.14" textLength="66" lengthAdjust="spacingAndGlyphs"><tspan fill="#2f4fa8">Initiative (iDSI)</tspan> is a global network of health,</text>
<text x="23.700" y="236.78" textLength="62" lengthAdjust="spacingAndGlyphs">policy and economic expertise, working to</text>
<text x="23.700" y="241.42" textLength="64" lengthAdjust="spacingAndGlyphs">achieve Universal Health Coverage and the</text>
<text x="23.700" y="246.06" textLength="66" lengthAdjust="spacingAndGlyphs">health Sustainable Development Goal (SDG</text>
<text x="23.700" y="250.70" textLength="41" lengthAdjust="spacingAndGlyphs">3) – <tspan fill="#2f6fd0" text-decoration="underline">https://idsihealth.org/</tspan></text>
<text x="20.200" y="257.00">•</text>
<text x="23.700" y="257.00" textLength="65" lengthAdjust="spacingAndGlyphs"><tspan fill="#2f4fa8">The Saw Swee Hock Asian Partnerships for</tspan></text>
<text x="23.700" y="261.64" textLength="62" lengthAdjust="spacingAndGlyphs"><tspan fill="#2f4fa8">Policy and Health Intervention Research</tspan></text>
<text x="23.700" y="266.28" textLength="66" lengthAdjust="spacingAndGlyphs"><tspan fill="#2f4fa8">and Evaluation (SAPPHIRE)</tspan> consortium is a</text>
<text x="23.700" y="270.92" textLength="55" lengthAdjust="spacingAndGlyphs">HTAsiaLink member that aims to foster</text>
<text x="23.700" y="275.56" textLength="68" lengthAdjust="spacingAndGlyphs">regional HTA and to lower the costs of HTA studies</text>
<text x="23.700" y="280.20" textLength="68" lengthAdjust="spacingAndGlyphs">of public health, priority setting and capacity</text>
<text x="23.700" y="284.84" textLength="59" lengthAdjust="spacingAndGlyphs">building – <tspan fill="#2f6fd0" text-decoration="underline">https://sapphire.hitap.net</tspan></text>
</g>
<rect x="94" y="229" width="99" height="49" fill="#2a376c"/>
<path d="M99.5 229 v49 M105.0 229 v49 M110.5 229 v49 M116.0 229 v49 M121.5 229 v49 M127.0 229 v49 M132.5 229 v49 M138.0 229 v49 M143.5 229 v49 M149.0 229 v49 M154.5 229 v49 M160.0 229 v49 M165.5 229 v49 M171.0 229 v49 M176.5 229 v49 M182.0 229 v49 M187.5 229 v49 M94 234.4 h99 M94 239.8 h99 M94 245.2 h99 M94 250.6 h99 M94 256.0 h99 M94 261.4 h99 M94 266.8 h99 M94 272.2 h99 " stroke="#3a4880" stroke-width="0.400" fill="none"/>
<path d="M107 250 L130 245 L146 262 L170 256 L182 242 M130 245 L150 252 L172 254 M138 240 L156 250 L177 264 M112 242 L140 256 L160 262" stroke="#6a78a8" stroke-width="0.350" fill="none" stroke-dasharray="0.600 0.900"/>
<g fill="#f4f4f6"><circle cx="105.500" cy="238.500" r="4.600"/><circle cx="102.500" cy="249" r="4.600"/><circle cx="129" cy="241" r="4.600"/><circle cx="138.500" cy="237.500" r="4.600"/><circle cx="146" cy="267.500" r="4.600"/><circle cx="182" cy="240" r="4.600"/><circle cx="172.500" cy="254" r="4.600"/><circle cx="180" cy="258" r="4.600"/><circle cx="177.500" cy="266.500" r="4.600"/></g>
<rect x="169.500" y="252" width="6" height="3.500" fill="#2d3c96"/><circle cx="180" cy="258" r="1.800" fill="#d86ad0"/>
<text x="170.500" y="281.600" font-size="2.700" font-weight="700" fill="#444" textLength="22" lengthAdjust="spacingAndGlyphs">Image: iDSI network</text>
<rect x="21" y="292" width="7" height="4.500" fill="#d8d8d8"/><text x="30.500" y="296.200" font-size="4.400" font-weight="700" fill="#2d3c96">HiTAP</text>
<path d="M46 294.300 h55" stroke="#5a4a8a" stroke-width="0.600"/><path d="M103.500 291.500 v5.500 M167 291.500 v5.500" stroke="#7a7a7a" stroke-width="0.500"/>
<text x="105" y="295.500" font-size="3.200" fill="#7a86a8" textLength="60" lengthAdjust="spacingAndGlyphs">Health Intervention and Technology Assessment Program</text>
<path d="M172 296.500 l3 -3 l3 2 l3 -4 l3 3 l3 -2 l3 1" fill="none" stroke="#d86ad0" stroke-width="0.700"/><path d="M172 297 h18" stroke="#7ab85a" stroke-width="0.800"/>

<!-- ===== thumbnail 16 (selected) ===== -->
<rect x="14.500" y="312.400" width="183.100" height="104.100" fill="#ffffff" stroke="#8f2a35" stroke-width="1.300"/>
<text x="20" y="329.600" font-size="7.700" fill="#333" textLength="106" lengthAdjust="spacingAndGlyphs">HTA Capacity Building Approach</text>
<g transform="translate(15.200 313.100) scale(0.3755) translate(-249 -198)">
<g>
<text x="330" y="255.300" font-size="2.700" fill="#333" textLength="60" lengthAdjust="spacingAndGlyphs">Figure 1: iDSI ToC – 2018 version</text>
<text x="452" y="266.800" font-size="7" fill="#444444" textLength="83.500" lengthAdjust="spacingAndGlyphs">iDSI ToC - 2018 version</text>
<path d="M362.300 285.500 V276.700 H441.700 V285.600" fill="none" stroke="#f0ad68" stroke-width="1.500"/>
<path d="M360.300 284.600 l2 2.900 l2 -2.900z" fill="#f0a050"/>
<path d="M452.500 285 V276.700 H533.200" fill="none" stroke="#62b092" stroke-width="1.500"/><path d="M532.700 276 V285.500" fill="none" stroke="#3f6a58" stroke-width="1.100"/>
<path d="M450.500 284.200 l2 2.900 l2 -2.900z" fill="#4fa080"/>
<path d="M391.700 290 V440 M506 290 V440 M558 290 V440" stroke="#c9c9c9" stroke-width="0.500" stroke-dasharray="0.800 1.200" fill="none"/>
<path d="M391.700 380 l2.500 5.500 l-2.500 5.500 M506 380 l2.500 5.500 l-2.500 5.500 M558 380 l2.500 5.500 l-2.500 5.500" stroke="#dcdcdc" stroke-width="0.500" fill="#ffffff"/>
<g transform="translate(0 0.900)">
<circle cx="362" cy="299.400" r="11" fill="#e8415c"/>
<g fill="none" stroke="#ffffff" stroke-width="0.700"><circle cx="362" cy="294.200" r="1.500"/><circle cx="357.300" cy="302.600" r="1.500"/><circle cx="366.700" cy="302.600" r="1.500"/><path d="M358 297.500 a5.200 5.200 0 0 1 2.300 -2.600 M363.700 294.900 a5.200 5.200 0 0 1 2.300 2.600 M365 304.300 a5.200 5.200 0 0 1 -6 0"/><path d="M359.600 301 l2.400 -3.600 l2.400 3.600z"/></g>
<circle cx="447" cy="299.400" r="11" fill="#f0892f"/>
<g fill="none" stroke="#ffffff" stroke-width="0.800"><circle cx="446.500" cy="299.800" r="7.400"/><circle cx="446.500" cy="299.800" r="4.600"/><path d="M444.300 299.800 l1.700 1.800 l3 -3.600"/><circle cx="453" cy="293.400" r="2" fill="#f0892f"/><path d="M452 293.400 h2 M453 292.400 v2"/></g>
<circle cx="532.600" cy="299.400" r="11" fill="#5aaa7c"/>
<g fill="none" stroke="#ffffff" stroke-width="0.700"><path d="M527.800 305.800 v-2.200 q-2.600 -2.800 -1.600 -6.400 q1.600 -4.200 6.200 -4.200 q5.200 0.400 5.800 5 l1.200 2.800 h-1.400 v2.800 h-2.800 v2.200"/><path d="M531.800 303 v-1.600 q-2.200 -1.600 -1.400 -3.800 q1 -1.800 2.400 -1.800 q2 0.200 2.400 1.800 q0.600 2.200 -1.400 3.800 v1.600z"/></g>
<circle cx="603.500" cy="299.400" r="11" fill="#55aae2"/>
<g fill="none" stroke="#ffffff" stroke-width="0.700"><circle cx="602.800" cy="298.800" r="5.800"/><ellipse cx="602.800" cy="298.800" rx="2.600" ry="5.800"/><path d="M597 298.800 h11.600 M598 295.800 h9.600 M598 301.800 h9.600"/><circle cx="606.600" cy="302.600" r="2.200" fill="#55aae2"/><path d="M608.200 304.200 l2.200 2.200" stroke-width="1"/></g>
</g>
<text x="362.3" y="322.00" font-size="4.85" fill="#333333" text-anchor="middle">Effective partnerships</text>
<text x="362.3" y="327.50" font-size="4.85" fill="#333333" text-anchor="middle">through iDSI</text>
<text x="448" y="322.00" font-size="4.85" fill="#333333" text-anchor="middle">Institutionalisation of <tspan fill="#f0892f">EIPS</tspan> at the country level</text>
<text x="531.6" y="322.00" font-size="4.85" fill="#333333" text-anchor="middle">Better decisions</text>
<text x="603.7" y="322.00" font-size="4.85" fill="#333333" text-anchor="middle">Better health outcomes and impact</text>
<rect x="337.700" y="334" width="49" height="39.600" rx="1.500" fill="#fad9db"/>
<rect x="337.700" y="398" width="49" height="39" rx="1.500" fill="#fad9db"/>
<path d="M362 362.500 v6 M362 408.500 v-6" stroke="#e8415c" stroke-width="0.600"/><path d="M360.800 363 l1.200 -2 l1.200 2z M360.800 408 l1.200 2 l1.200 -2z" fill="#e8415c"/>
<circle cx="362" cy="385.700" r="19.200" fill="#e8415c"/>
<text x="362" y="339.10" font-size="3.4" fill="#2a1519" text-anchor="middle" font-weight="700">iDSI creates strong</text>
<text x="362" y="344.00" font-size="3.4" fill="#2a1519" text-anchor="middle" font-weight="700">links with global health</text>
<text x="362" y="348.90" font-size="3.4" fill="#2a1519" text-anchor="middle" font-weight="700">stakeholders who are able</text>
<text x="362" y="353.80" font-size="3.4" fill="#2a1519" text-anchor="middle" font-weight="700">to advocate for evidence-</text>
<text x="362" y="358.70" font-size="3.4" fill="#2a1519" text-anchor="middle" font-weight="700">informed priority setting</text>
<text x="362" y="377.30" font-size="3.5" fill="#ffffff" text-anchor="middle" font-weight="700">iDSI is a</text>
<text x="362" y="381.90" font-size="3.5" fill="#ffffff" text-anchor="middle" font-weight="700">vibrant,</text>
<text x="362" y="386.50" font-size="3.5" fill="#ffffff" text-anchor="middle" font-weight="700">effective and</text>
<text x="362" y="391.10" font-size="3.5" fill="#ffffff" text-anchor="middle" font-weight="700">functioning</text>
<text x="362" y="395.70" font-size="3.5" fill="#ffffff" text-anchor="middle" font-weight="700">network</text>
<text x="362" y="413.60" font-size="3.4" fill="#2a1519" text-anchor="middle" font-weight="700">iDSI builds strong</text>
<text x="362" y="418.85" font-size="3.4" fill="#2a1519" text-anchor="middle" font-weight="700">partnerships with</text>
<text x="362" y="424.10" font-size="3.4" fill="#2a1519" text-anchor="middle" font-weight="700">organisations who can</text>
<text x="362" y="429.35" font-size="3.4" fill="#2a1519" text-anchor="middle" font-weight="700">provide practical support</text>
<text x="362" y="434.60" font-size="3.4" fill="#2a1519" text-anchor="middle" font-weight="700">at country level</text>
<path d="M405 331.300 H398.200 V438.900 H500.600 V331.300 H494.300" fill="none" stroke="#f2bd88" stroke-width="0.700"/>
<path d="M406.800 327 h-1.800 v5.600 h1.800 M492.500 327 h1.800 v5.600 h-1.800" fill="none" stroke="#eba45a" stroke-width="0.600"/>
<text x="449" y="330.800" font-size="3.200" fill="#2a2a2a" font-weight="700" text-anchor="middle">Context driven, politically aware and flexible support</text>
<rect x="400" y="334" width="42" height="38.4" rx="1.500" fill="#fad3ad"/>
<rect x="456.8" y="334" width="41" height="38.4" rx="1.500" fill="#fad3ad"/>
<rect x="400" y="397.6" width="42" height="39.2" rx="1.500" fill="#fad3ad"/>
<rect x="456.8" y="397.6" width="41" height="39.2" rx="1.500" fill="#fad3ad"/>
<circle cx="450" cy="386.200" r="18.300" fill="#fce4cc" stroke="#ffffff" stroke-width="1.800"/>
<g stroke="#e3925a" stroke-width="0.600" stroke-dasharray="1.200 1" fill="none"><path d="M445 347.800 h9 M445 359.400 h9 M445 410.200 h9 M445 418.200 h9 M414.600 377 v16 M424.500 377 v16 M473.800 377 v16 M484.500 377 v16"/></g>
<g fill="#e3925a"><path d="M445 346.700 l-1.800 1.100 l1.800 1.100z M454 346.700 l1.800 1.100 l-1.800 1.100z M445 358.300 l-1.800 1.100 l1.800 1.100z M454 417.100 l1.800 1.100 l-1.800 1.100z M445 417.100 l-1.800 1.100 l1.800 1.100z M454 409.100 l1.800 1.100 l-1.800 1.100z M413.500 377.500 l1.100 -1.800 l1.100 1.800z M413.500 392.500 l1.100 1.800 l1.100 -1.800z M423.400 377.500 l1.100 -1.800 l1.100 1.800z M472.700 392.500 l1.100 1.800 l1.100 -1.800z M483.400 377.500 l1.100 -1.800 l1.100 1.800z M483.400 392.500 l1.100 1.800 l1.100 -1.800z"/></g>
<text x="421" y="338.70" font-size="3.3" fill="#2a1c12" text-anchor="middle" font-weight="700">Increased political</text>
<text x="421" y="343.25" font-size="3.3" fill="#2a1c12" text-anchor="middle" font-weight="700">commitment and</text>
<text x="421" y="347.80" font-size="3.3" fill="#2a1c12" text-anchor="middle" font-weight="700">buy-in to evidence-</text>
<text x="421" y="352.35" font-size="3.3" fill="#2a1c12" text-anchor="middle" font-weight="700">informed priority</text>
<text x="421" y="356.90" font-size="3.3" fill="#2a1c12" text-anchor="middle" font-weight="700">setting agenda from</text>
<text x="421" y="361.45" font-size="3.3" fill="#2a1c12" text-anchor="middle" font-weight="700">stakeholders</text>
<text x="477.3" y="338.70" font-size="3.3" fill="#2a1c12" text-anchor="middle" font-weight="700">Routine generation</text>
<text x="477.3" y="343.25" font-size="3.3" fill="#2a1c12" text-anchor="middle" font-weight="700">of high quality,</text>
<text x="477.3" y="347.80" font-size="3.3" fill="#2a1c12" text-anchor="middle" font-weight="700">relevant and</text>
<text x="477.3" y="352.35" font-size="3.3" fill="#2a1c12" text-anchor="middle" font-weight="700">appropriate evidence-</text>
<text x="477.3" y="356.90" font-size="3.3" fill="#2a1c12" text-anchor="middle" font-weight="700">informed products at</text>
<text x="477.3" y="361.45" font-size="3.3" fill="#2a1c12" text-anchor="middle" font-weight="700">country level</text>
<text x="450" y="374.20" font-size="3.3" fill="#2a1c12" text-anchor="middle" font-weight="700">Strengthened</text>
<text x="450" y="378.86" font-size="3.3" fill="#2a1c12" text-anchor="middle" font-weight="700">technical capacity</text>
<text x="450" y="383.52" font-size="3.3" fill="#2a1c12" text-anchor="middle" font-weight="700">and motivation to</text>
<text x="450" y="388.18" font-size="3.3" fill="#2a1c12" text-anchor="middle" font-weight="700">act on and create</text>
<text x="450" y="392.84" font-size="3.3" fill="#2a1c12" text-anchor="middle" font-weight="700">opportunities for</text>
<text x="450" y="397.50" font-size="3.3" fill="#2a1c12" text-anchor="middle" font-weight="700">EIPS at country</text>
<text x="450" y="402.16" font-size="3.3" fill="#2a1c12" text-anchor="middle" font-weight="700">level</text>
<text x="421" y="401.30" font-size="3.1" fill="#2a1c12" text-anchor="middle" font-weight="700">Creation of</text>
<text x="421" y="405.62" font-size="3.1" fill="#2a1c12" text-anchor="middle" font-weight="700">credible, objective</text>
<text x="421" y="409.94" font-size="3.1" fill="#2a1c12" text-anchor="middle" font-weight="700">and trusted</text>
<text x="421" y="414.26" font-size="3.1" fill="#2a1c12" text-anchor="middle" font-weight="700">institutionalised</text>
<text x="421" y="418.58" font-size="3.1" fill="#2a1c12" text-anchor="middle" font-weight="700">structures and processes</text>
<text x="421" y="422.90" font-size="3.1" fill="#2a1c12" text-anchor="middle" font-weight="700">championing the</text>
<text x="421" y="427.22" font-size="3.1" fill="#2a1c12" text-anchor="middle" font-weight="700">routine consideration of</text>
<text x="421" y="431.54" font-size="3.1" fill="#2a1c12" text-anchor="middle" font-weight="700">evidence for policy and</text>
<text x="421" y="435.86" font-size="3.1" fill="#2a1c12" text-anchor="middle" font-weight="700">resourcing decisions</text>
<text x="477.3" y="405.20" font-size="3.3" fill="#2a1c12" text-anchor="middle" font-weight="700">There is a</text>
<text x="477.3" y="409.58" font-size="3.3" fill="#2a1c12" text-anchor="middle" font-weight="700">strengthened</text>
<text x="477.3" y="413.96" font-size="3.3" fill="#2a1c12" text-anchor="middle" font-weight="700">network of suppliers</text>
<text x="477.3" y="418.34" font-size="3.3" fill="#2a1c12" text-anchor="middle" font-weight="700">and users of</text>
<text x="477.3" y="422.72" font-size="3.3" fill="#2a1c12" text-anchor="middle" font-weight="700">evidence-informed</text>
<text x="477.3" y="427.10" font-size="3.3" fill="#2a1c12" text-anchor="middle" font-weight="700">products and policy</text>
<text x="477.3" y="431.48" font-size="3.3" fill="#2a1c12" text-anchor="middle" font-weight="700">at country level</text>
<rect x="511.600" y="333" width="41.600" height="40" rx="1.500" fill="#e3ece5"/>
<rect x="511.600" y="396.800" width="41.600" height="39.600" rx="1.500" fill="#e3ece5"/>
<path d="M532.400 373.500 v19.500" stroke="#7aa88e" stroke-width="0.600"/><path d="M531.200 392.500 l1.200 2 l1.200 -2z" fill="#7aa88e"/>
<text x="532.4" y="338.20" font-size="3.1" fill="#222c26" text-anchor="middle" font-weight="700">Decision-making in</text>
<text x="532.4" y="342.80" font-size="3.1" fill="#222c26" text-anchor="middle" font-weight="700">health is undertaken</text>
<text x="532.4" y="347.40" font-size="3.1" fill="#222c26" text-anchor="middle" font-weight="700">according to the core</text>
<text x="532.4" y="352.00" font-size="3.1" fill="#222c26" text-anchor="middle" font-weight="700">principles of evidence-</text>
<text x="532.4" y="356.60" font-size="3.1" fill="#222c26" text-anchor="middle" font-weight="700">informed priority</text>
<text x="532.4" y="361.20" font-size="3.1" fill="#222c26" text-anchor="middle" font-weight="700">setting and with ethical</text>
<text x="532.4" y="365.80" font-size="3.1" fill="#222c26" text-anchor="middle" font-weight="700">and social value</text>
<text x="532.4" y="370.40" font-size="3.1" fill="#222c26" text-anchor="middle" font-weight="700">considerations</text>
<text x="532.4" y="409.20" font-size="3.2" fill="#222c26" text-anchor="middle" font-weight="700">More efficient and</text>
<text x="532.4" y="413.95" font-size="3.2" fill="#222c26" text-anchor="middle" font-weight="700">equitable resource</text>
<text x="532.4" y="418.70" font-size="3.2" fill="#222c26" text-anchor="middle" font-weight="700">allocation decisions</text>
<text x="532.4" y="423.45" font-size="3.2" fill="#222c26" text-anchor="middle" font-weight="700">with trade-offs</text>
<text x="532.4" y="428.20" font-size="3.2" fill="#222c26" text-anchor="middle" font-weight="700">made explicit</text>
<circle cx="583.800" cy="385.300" r="19.200" fill="#d5e6f6"/>
<circle cx="629.500" cy="385.300" r="19.400" fill="#4fa8e1"/>
<path d="M605 385.300 h3.500" stroke="#6ab4e6" stroke-width="0.600"/><path d="M605.200 384.300 l-1.600 1 l1.600 1z M608.300 384.300 l1.600 1 l-1.600 1z" fill="#6ab4e6"/>
<text x="583.8" y="379.60" font-size="4.0" fill="#25323f" text-anchor="middle" font-weight="700">Better</text>
<text x="583.8" y="385.00" font-size="4.0" fill="#25323f" text-anchor="middle" font-weight="700">healthcare</text>
<text x="583.8" y="390.40" font-size="4.0" fill="#25323f" text-anchor="middle" font-weight="700">coverage</text>
<rect x="625.100" y="371.200" width="9" height="12.200" rx="0.900" fill="none" stroke="#ffffff" stroke-width="0.900"/><rect x="627.600" y="370" width="4" height="2.100" rx="0.500" fill="#ffffff"/><circle cx="629.600" cy="376.300" r="2.300" fill="none" stroke="#ffffff" stroke-width="0.700"/><path d="M628.500 376.300 l0.900 0.900 l1.500 -1.900 M627 380.200 h5.200 M627 381.700 h5.200" fill="none" stroke="#ffffff" stroke-width="0.600"/>
<text x="629.6" y="391.20" font-size="4.3" fill="#ffffff" text-anchor="middle">Better</text>
<text x="629.6" y="396.30" font-size="4.3" fill="#ffffff" text-anchor="middle">Health</text>
<text x="269.800" y="455.300" font-size="5.400" fill="#555">16</text>
<text x="291.600" y="460.800" font-size="5.600" fill="#1e1e1e" class="ser" font-style="italic" textLength="414.500" lengthAdjust="spacingAndGlyphs">Source: Ibid. International Decision Support Initiative (iDSI) Theory of Change Review Report. Link: <tspan fill="#2a52a8" text-decoration="underline">https://f1000research.com/documents/7-1659</tspan></text>
<path d="M313.200 461.900 h11" stroke="#d03a2a" stroke-width="0.500"/>
</g>

</g>

<!-- ===== thumbnail 17 ===== -->
<rect x="15" y="427.500" width="182.300" height="42" fill="#ffffff"/>
<text x="26" y="445.300" font-size="7.700" fill="#4a4a4a" textLength="85.500" lengthAdjust="spacingAndGlyphs">Engagement and Outputs</text>
<rect x="28" y="452" width="48" height="17" fill="#4472c4"/><rect x="82.500" y="452" width="48" height="17" fill="#3cb48e"/><rect x="137" y="452" width="49" height="17" fill="#70ad47"/>
<g font-size="4.100" fill="#ffffff" text-anchor="middle" font-weight="700">
<text x="52" y="459.500">HTA in partner</text><text x="52" y="464.600">countries</text>
<text x="106.500" y="456.400">Enable Greater</text><text x="106.500" y="461.400">Research in partner</text><text x="106.500" y="466.400">countries</text>
<text x="161.500" y="459.500">Global and regional</text><text x="161.500" y="464.600">public goods</text>
</g>

<!-- ===== main slide ===== -->
<rect x="249" y="198" width="484.100" height="271" fill="#ffffff"/>
<text x="261.500" y="241.900" font-size="20" fill="#303030" textLength="281.500" lengthAdjust="spacingAndGlyphs">HTA Capacity Building Approach</text>
<g>
<text x="330" y="255.300" font-size="2.700" fill="#333" textLength="60" lengthAdjust="spacingAndGlyphs">Figure 1: iDSI ToC – 2018 version</text>
<text x="452" y="266.800" font-size="7" fill="#444444" textLength="83.500" lengthAdjust="spacingAndGlyphs">iDSI ToC - 2018 version</text>
<path d="M362.300 285.500 V276.700 H441.700 V285.600" fill="none" stroke="#f0ad68" stroke-width="1.500"/>
<path d="M360.300 284.600 l2 2.900 l2 -2.900z" fill="#f0a050"/>
<path d="M452.500 285 V276.700 H533.200" fill="none" stroke="#62b092" stroke-width="1.500"/><path d="M532.700 276 V285.500" fill="none" stroke="#3f6a58" stroke-width="1.100"/>
<path d="M450.500 284.200 l2 2.900 l2 -2.900z" fill="#4fa080"/>
<path d="M391.700 290 V440 M506 290 V440 M558 290 V440" stroke="#c9c9c9" stroke-width="0.500" stroke-dasharray="0.800 1.200" fill="none"/>
<path d="M391.700 380 l2.500 5.500 l-2.500 5.500 M506 380 l2.500 5.500 l-2.500 5.500 M558 380 l2.500 5.500 l-2.500 5.500" stroke="#dcdcdc" stroke-width="0.500" fill="#ffffff"/>
<g transform="translate(0 0.900)">
<circle cx="362" cy="299.400" r="11" fill="#e8415c"/>
<g fill="none" stroke="#ffffff" stroke-width="0.700"><circle cx="362" cy="294.200" r="1.500"/><circle cx="357.300" cy="302.600" r="1.500"/><circle cx="366.700" cy="302.600" r="1.500"/><path d="M358 297.500 a5.200 5.200 0 0 1 2.300 -2.600 M363.700 294.900 a5.200 5.200 0 0 1 2.300 2.600 M365 304.300 a5.200 5.200 0 0 1 -6 0"/><path d="M359.600 301 l2.400 -3.600 l2.400 3.600z"/></g>
<circle cx="447" cy="299.400" r="11" fill="#f0892f"/>
<g fill="none" stroke="#ffffff" stroke-width="0.800"><circle cx="446.500" cy="299.800" r="7.400"/><circle cx="446.500" cy="299.800" r="4.600"/><path d="M444.300 299.800 l1.700 1.800 l3 -3.600"/><circle cx="453" cy="293.400" r="2" fill="#f0892f"/><path d="M452 293.400 h2 M453 292.400 v2"/></g>
<circle cx="532.600" cy="299.400" r="11" fill="#5aaa7c"/>
<g fill="none" stroke="#ffffff" stroke-width="0.700"><path d="M527.800 305.800 v-2.200 q-2.600 -2.800 -1.600 -6.400 q1.600 -4.200 6.200 -4.200 q5.200 0.400 5.800 5 l1.200 2.800 h-1.400 v2.800 h-2.800 v2.200"/><path d="M531.800 303 v-1.600 q-2.200 -1.600 -1.400 -3.800 q1 -1.800 2.400 -1.800 q2 0.200 2.400 1.800 q0.600 2.200 -1.400 3.800 v1.600z"/></g>
<circle cx="603.500" cy="299.400" r="11" fill="#55aae2"/>
<g fill="none" stroke="#ffffff" stroke-width="0.700"><circle cx="602.800" cy="298.800" r="5.800"/><ellipse cx="602.800" cy="298.800" rx="2.600" ry="5.800"/><path d="M597 298.800 h11.600 M598 295.800 h9.600 M598 301.800 h9.600"/><circle cx="606.600" cy="302.600" r="2.200" fill="#55aae2"/><path d="M608.200 304.200 l2.200 2.200" stroke-width="1"/></g>
</g>
<text x="362.3" y="322.00" font-size="4.85" fill="#333333" text-anchor="middle">Effective partnerships</text>
<text x="362.3" y="327.50" font-size="4.85" fill="#333333" text-anchor="middle">through iDSI</text>
<text x="448" y="322.00" font-size="4.85" fill="#333333" text-anchor="middle">Institutionalisation of <tspan fill="#f0892f">EIPS</tspan> at the country level</text>
<text x="531.6" y="322.00" font-size="4.85" fill="#333333" text-anchor="middle">Better decisions</text>
<text x="603.7" y="322.00" font-size="4.85" fill="#333333" text-anchor="middle">Better health outcomes and impact</text>
<circle cx="384" cy="330" r="2.600" fill="#ffffff" stroke="#2d8cee" stroke-width="1.500"/>
<rect x="337.700" y="334" width="49" height="39.600" rx="1.500" fill="#fad9db"/>
<rect x="337.700" y="398" width="49" height="39" rx="1.500" fill="#fad9db"/>
<path d="M362 362.500 v6 M362 408.500 v-6" stroke="#e8415c" stroke-width="0.600"/><path d="M360.800 363 l1.200 -2 l1.200 2z M360.800 408 l1.200 2 l1.200 -2z" fill="#e8415c"/>
<circle cx="362" cy="385.700" r="19.200" fill="#e8415c"/>
<text x="362" y="339.10" font-size="3.4" fill="#2a1519" text-anchor="middle" font-weight="700">iDSI creates strong</text>
<text x="362" y="344.00" font-size="3.4" fill="#2a1519" text-anchor="middle" font-weight="700">links with global health</text>
<text x="362" y="348.90" font-size="3.4" fill="#2a1519" text-anchor="middle" font-weight="700">stakeholders who are able</text>
<text x="362" y="353.80" font-size="3.4" fill="#2a1519" text-anchor="middle" font-weight="700">to advocate for evidence-</text>
<text x="362" y="358.70" font-size="3.4" fill="#2a1519" text-anchor="middle" font-weight="700">informed priority setting</text>
<text x="362" y="377.30" font-size="3.5" fill="#ffffff" text-anchor="middle" font-weight="700">iDSI is a</text>
<text x="362" y="381.90" font-size="3.5" fill="#ffffff" text-anchor="middle" font-weight="700">vibrant,</text>
<text x="362" y="386.50" font-size="3.5" fill="#ffffff" text-anchor="middle" font-weight="700">effective and</text>
<text x="362" y="391.10" font-size="3.5" fill="#ffffff" text-anchor="middle" font-weight="700">functioning</text>
<text x="362" y="395.70" font-size="3.5" fill="#ffffff" text-anchor="middle" font-weight="700">network</text>
<text x="362" y="413.60" font-size="3.4" fill="#2a1519" text-anchor="middle" font-weight="700">iDSI builds strong</text>
<text x="362" y="418.85" font-size="3.4" fill="#2a1519" text-anchor="middle" font-weight="700">partnerships with</text>
<text x="362" y="424.10" font-size="3.4" fill="#2a1519" text-anchor="middle" font-weight="700">organisations who can</text>
<text x="362" y="429.35" font-size="3.4" fill="#2a1519" text-anchor="middle" font-weight="700">provide practical support</text>
<text x="362" y="434.60" font-size="3.4" fill="#2a1519" text-anchor="middle" font-weight="700">at country level</text>
<path d="M405 331.300 H398.200 V438.900 H500.600 V331.300 H494.300" fill="none" stroke="#f2bd88" stroke-width="0.700"/>
<path d="M406.800 327 h-1.800 v5.600 h1.800 M492.500 327 h1.800 v5.600 h-1.800" fill="none" stroke="#eba45a" stroke-width="0.600"/>
<text x="449" y="330.800" font-size="3.200" fill="#2a2a2a" font-weight="700" text-anchor="middle">Context driven, politically aware and flexible support</text>
<rect x="400" y="334" width="42" height="38.4" rx="1.500" fill="#fad3ad"/>
<rect x="456.8" y="334" width="41" height="38.4" rx="1.500" fill="#fad3ad"/>
<rect x="400" y="397.6" width="42" height="39.2" rx="1.500" fill="#fad3ad"/>
<rect x="456.8" y="397.6" width="41" height="39.2" rx="1.500" fill="#fad3ad"/>
<circle cx="450" cy="386.200" r="18.300" fill="#fce4cc" stroke="#ffffff" stroke-width="1.800"/>
<g stroke="#e3925a" stroke-width="0.600" stroke-dasharray="1.200 1" fill="none"><path d="M445 347.800 h9 M445 359.400 h9 M445 410.200 h9 M445 418.200 h9 M414.600 377 v16 M424.500 377 v16 M473.800 377 v16 M484.500 377 v16"/></g>
<g fill="#e3925a"><path d="M445 346.700 l-1.800 1.100 l1.800 1.100z M454 346.700 l1.800 1.100 l-1.800 1.100z M445 358.300 l-1.800 1.100 l1.800 1.100z M454 417.100 l1.800 1.100 l-1.800 1.100z M445 417.100 l-1.800 1.100 l1.800 1.100z M454 409.100 l1.800 1.100 l-1.800 1.100z M413.500 377.500 l1.100 -1.800 l1.100 1.800z M413.500 392.500 l1.100 1.800 l1.100 -1.800z M423.400 377.500 l1.100 -1.800 l1.100 1.800z M472.700 392.500 l1.100 1.800 l1.100 -1.800z M483.400 377.500 l1.100 -1.800 l1.100 1.800z M483.400 392.500 l1.100 1.800 l1.100 -1.800z"/></g>
<text x="421" y="338.70" font-size="3.3" fill="#2a1c12" text-anchor="middle" font-weight="700">Increased political</text>
<text x="421" y="343.25" font-size="3.3" fill="#2a1c12" text-anchor="middle" font-weight="700">commitment and</text>
<text x="421" y="347.80" font-size="3.3" fill="#2a1c12" text-anchor="middle" font-weight="700">buy-in to evidence-</text>
<text x="421" y="352.35" font-size="3.3" fill="#2a1c12" text-anchor="middle" font-weight="700">informed priority</text>
<text x="421" y="356.90" font-size="3.3" fill="#2a1c12" text-anchor="middle" font-weight="700">setting agenda from</text>
<text x="421" y="361.45" font-size="3.3" fill="#2a1c12" text-anchor="middle" font-weight="700">stakeholders</text>
<text x="477.3" y="338.70" font-size="3.3" fill="#2a1c12" text-anchor="middle" font-weight="700">Routine generation</text>
<text x="477.3" y="343.25" font-size="3.3" fill="#2a1c12" text-anchor="middle" font-weight="700">of high quality,</text>
<text x="477.3" y="347.80" font-size="3.3" fill="#2a1c12" text-anchor="middle" font-weight="700">relevant and</text>
<text x="477.3" y="352.35" font-size="3.3" fill="#2a1c12" text-anchor="middle" font-weight="700">appropriate evidence-</text>
<text x="477.3" y="356.90" font-size="3.3" fill="#2a1c12" text-anchor="middle" font-weight="700">informed products at</text>
<text x="477.3" y="361.45" font-size="3.3" fill="#2a1c12" text-anchor="middle" font-weight="700">country level</text>
<text x="450" y="374.20" font-size="3.3" fill="#2a1c12" text-anchor="middle" font-weight="700">Strengthened</text>
<text x="450" y="378.86" font-size="3.3" fill="#2a1c12" text-anchor="middle" font-weight="700">technical capacity</text>
<text x="450" y="383.52" font-size="3.3" fill="#2a1c12" text-anchor="middle" font-weight="700">and motivation to</text>
<text x="450" y="388.18" font-size="3.3" fill="#2a1c12" text-anchor="middle" font-weight="700">act on and create</text>
<text x="450" y="392.84" font-size="3.3" fill="#2a1c12" text-anchor="middle" font-weight="700">opportunities for</text>
<text x="450" y="397.50" font-size="3.3" fill="#2a1c12" text-anchor="middle" font-weight="700">EIPS at country</text>
<text x="450" y="402.16" font-size="3.3" fill="#2a1c12" text-anchor="middle" font-weight="700">level</text>
<text x="421" y="401.30" font-size="3.1" fill="#2a1c12" text-anchor="middle" font-weight="700">Creation of</text>
<text x="421" y="405.62" font-size="3.1" fill="#2a1c12" text-anchor="middle" font-weight="700">credible, objective</text>
<text x="421" y="409.94" font-size="3.1" fill="#2a1c12" text-anchor="middle" font-weight="700">and trusted</text>
<text x="421" y="414.26" font-size="3.1" fill="#2a1c12" text-anchor="middle" font-weight="700">institutionalised</text>
<text x="421" y="418.58" font-size="3.1" fill="#2a1c12" text-anchor="middle" font-weight="700">structures and processes</text>
<text x="421" y="422.90" font-size="3.1" fill="#2a1c12" text-anchor="middle" font-weight="700">championing the</text>
<text x="421" y="427.22" font-size="3.1" fill="#2a1c12" text-anchor="middle" font-weight="700">routine consideration of</text>
<text x="421" y="431.54" font-size="3.1" fill="#2a1c12" text-anchor="middle" font-weight="700">evidence for policy and</text>
<text x="421" y="435.86" font-size="3.1" fill="#2a1c12" text-anchor="middle" font-weight="700">resourcing decisions</text>
<text x="477.3" y="405.20" font-size="3.3" fill="#2a1c12" text-anchor="middle" font-weight="700">There is a</text>
<text x="477.3" y="409.58" font-size="3.3" fill="#2a1c12" text-anchor="middle" font-weight="700">strengthened</text>
<text x="477.3" y="413.96" font-size="3.3" fill="#2a1c12" text-anchor="middle" font-weight="700">network of suppliers</text>
<text x="477.3" y="418.34" font-size="3.3" fill="#2a1c12" text-anchor="middle" font-weight="700">and users of</text>
<text x="477.3" y="422.72" font-size="3.3" fill="#2a1c12" text-anchor="middle" font-weight="700">evidence-informed</text>
<text x="477.3" y="427.10" font-size="3.3" fill="#2a1c12" text-anchor="middle" font-weight="700">products and policy</text>
<text x="477.3" y="431.48" font-size="3.3" fill="#2a1c12" text-anchor="middle" font-weight="700">at country level</text>
<rect x="511.600" y="333" width="41.600" height="40" rx="1.500" fill="#e3ece5"/>
<rect x="511.600" y="396.800" width="41.600" height="39.600" rx="1.500" fill="#e3ece5"/>
<path d="M532.400 373.500 v19.500" stroke="#7aa88e" stroke-width="0.600"/><path d="M531.200 392.500 l1.200 2 l1.200 -2z" fill="#7aa88e"/>
<text x="532.4" y="338.20" font-size="3.1" fill="#222c26" text-anchor="middle" font-weight="700">Decision-making in</text>
<text x="532.4" y="342.80" font-size="3.1" fill="#222c26" text-anchor="middle" font-weight="700">health is undertaken</text>
<text x="532.4" y="347.40" font-size="3.1" fill="#222c26" text-anchor="middle" font-weight="700">according to the core</text>
<text x="532.4" y="352.00" font-size="3.1" fill="#222c26" text-anchor="middle" font-weight="700">principles of evidence-</text>
<text x="532.4" y="356.60" font-size="3.1" fill="#222c26" text-anchor="middle" font-weight="700">informed priority</text>
<text x="532.4" y="361.20" font-size="3.1" fill="#222c26" text-anchor="middle" font-weight="700">setting and with ethical</text>
<text x="532.4" y="365.80" font-size="3.1" fill="#222c26" text-anchor="middle" font-weight="700">and social value</text>
<text x="532.4" y="370.40" font-size="3.1" fill="#222c26" text-anchor="middle" font-weight="700">considerations</text>
<text x="532.4" y="409.20" font-size="3.2" fill="#222c26" text-anchor="middle" font-weight="700">More efficient and</text>
<text x="532.4" y="413.95" font-size="3.2" fill="#222c26" text-anchor="middle" font-weight="700">equitable resource</text>
<text x="532.4" y="418.70" font-size="3.2" fill="#222c26" text-anchor="middle" font-weight="700">allocation decisions</text>
<text x="532.4" y="423.45" font-size="3.2" fill="#222c26" text-anchor="middle" font-weight="700">with trade-offs</text>
<text x="532.4" y="428.20" font-size="3.2" fill="#222c26" text-anchor="middle" font-weight="700">made explicit</text>
<circle cx="583.800" cy="385.300" r="19.200" fill="#d5e6f6"/>
<circle cx="629.500" cy="385.300" r="19.400" fill="#4fa8e1"/>
<path d="M605 385.300 h3.500" stroke="#6ab4e6" stroke-width="0.600"/><path d="M605.200 384.300 l-1.600 1 l1.600 1z M608.300 384.300 l1.600 1 l-1.600 1z" fill="#6ab4e6"/>
<text x="583.8" y="379.60" font-size="4.0" fill="#25323f" text-anchor="middle" font-weight="700">Better</text>
<text x="583.8" y="385.00" font-size="4.0" fill="#25323f" text-anchor="middle" font-weight="700">healthcare</text>
<text x="583.8" y="390.40" font-size="4.0" fill="#25323f" text-anchor="middle" font-weight="700">coverage</text>
<rect x="625.100" y="371.200" width="9" height="12.200" rx="0.900" fill="none" stroke="#ffffff" stroke-width="0.900"/><rect x="627.600" y="370" width="4" height="2.100" rx="0.500" fill="#ffffff"/><circle cx="629.600" cy="376.300" r="2.300" fill="none" stroke="#ffffff" stroke-width="0.700"/><path d="M628.500 376.300 l0.900 0.900 l1.500 -1.900 M627 380.200 h5.200 M627 381.700 h5.200" fill="none" stroke="#ffffff" stroke-width="0.600"/>
<text x="629.6" y="391.20" font-size="4.3" fill="#ffffff" text-anchor="middle">Better</text>
<text x="629.6" y="396.30" font-size="4.3" fill="#ffffff" text-anchor="middle">Health</text>
<text x="269.800" y="455.300" font-size="5.400" fill="#555">16</text>
<text x="291.600" y="460.800" font-size="5.600" fill="#1e1e1e" class="ser" font-style="italic" textLength="414.500" lengthAdjust="spacingAndGlyphs">Source: Ibid. International Decision Support Initiative (iDSI) Theory of Change Review Report. Link: <tspan fill="#2a52a8" text-decoration="underline">https://f1000research.com/documents/7-1659</tspan></text>
<path d="M313.200 461.900 h11" stroke="#d03a2a" stroke-width="0.500"/>
</g>

</g>
</svg>
</body>
</html>
